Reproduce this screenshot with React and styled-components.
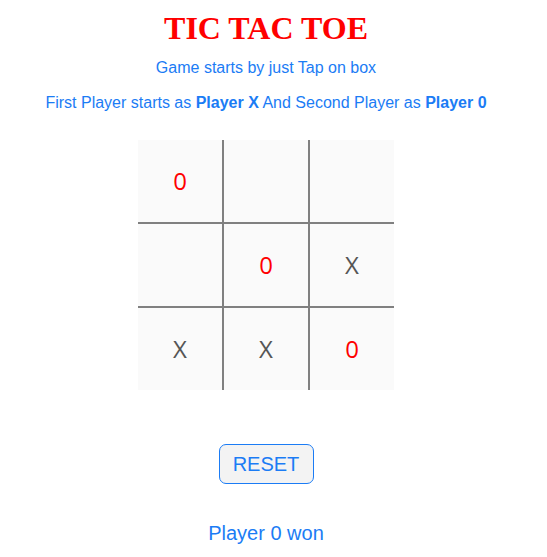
import React from "react";
import styled, { createGlobalStyle } from "styled-components";

const GlobalStyle = createGlobalStyle`
  html, body { margin: 0; padding: 0; background: #ffffff; }
  body { font-family: "Liberation Sans", Arial, sans-serif; }
`;

const Page = styled.main`
  width: 532px;
  display: flex;
  flex-direction: column;
  align-items: center;
  text-align: center;
`;

const Title = styled.h1`
  margin: 10px 0 0;
  font-family: "Liberation Serif", "Times New Roman", serif;
  font-weight: bold;
  font-size: 32px;
  line-height: 37px;
  color: #ff0000;
`;

const Info = styled.p`
  margin: ${(p) => p.$top}px 0 0;
  font-size: 16px;
  line-height: 18px;
  color: #1b7cf5;
  b { font-weight: bold; }
`;

const Board = styled.div`
  margin-top: 28px;
  display: grid;
  grid-template-columns: repeat(3, 84px);
  grid-template-rows: repeat(3, 82px);
  gap: 2px;
  background: #808080;
`;

const Cell = styled.div`
  background: #fafafa;
  display: flex;
  align-items: center;
  justify-content: center;
  padding-bottom: 2px;
  box-sizing: border-box;
  font-family: "Open Sans", "Noto Sans", sans-serif;
  font-size: 24px;
  color: ${(p) => (p.$mark === "0" ? "#ff0000" : "#555555")};
`;

const ResetButton = styled.button`
  margin-top: 54px;
  box-sizing: border-box;
  width: 95px;
  height: 40px;
  border: 1px solid #1b7cf5;
  border-radius: 7px;
  background: #f3f3f3;
  color: #1b7cf5;
  font-family: "Liberation Sans", Arial, sans-serif;
  font-size: 20px;
  padding: 0;
  cursor: pointer;
`;

const Status = styled.p`
  margin: 38px 0 0;
  font-size: 20px;
  line-height: 23px;
  color: #1b7cf5;
`;

const cells = ["0", "", "", "", "0", "X", "X", "X", "0"];

export default function App() {
  return (
    <>
      <GlobalStyle />
      <Page>
        <Title>TIC TAC TOE</Title>
        <Info $top={12}>Game starts by just Tap on box</Info>
        <Info $top={17}>
          First Player starts as <b>Player X</b> And Second Player as <b>Player 0</b>
        </Info>
        <Board>
          {cells.map((m, i) => (
            <Cell key={i} $mark={m}>
              {m}
            </Cell>
          ))}
        </Board>
        <ResetButton>RESET</ResetButton>
        <Status>Player 0 won</Status>
      </Page>
    </>
  );
}
